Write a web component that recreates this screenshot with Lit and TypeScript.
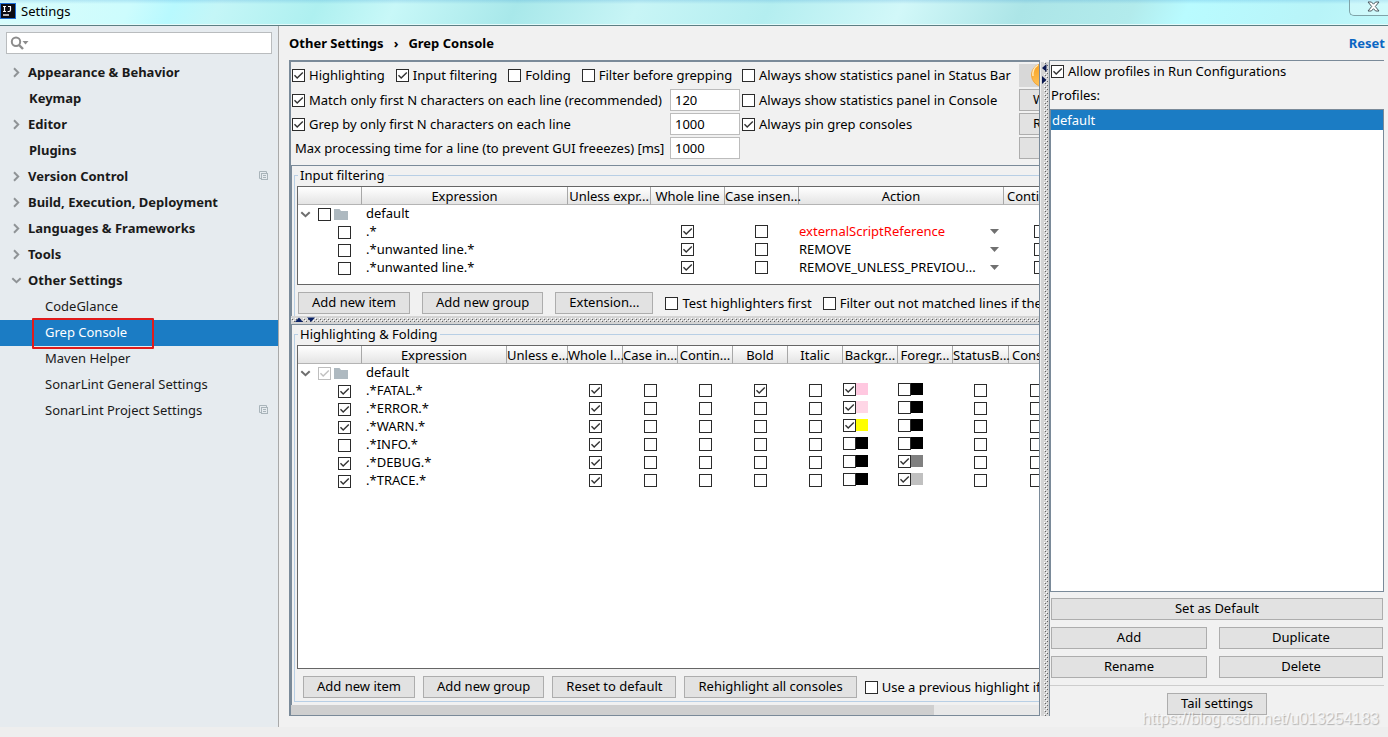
import { LitElement, html, css, svg, nothing } from "lit";
import { customElement } from "lit/decorators.js";
import { classMap } from "lit/directives/class-map.js";
import { styleMap } from "lit/directives/style-map.js";

interface NavItem {
  label: string;
  kind: "closed" | "open" | "top" | "child";
  selected?: boolean;
  project?: boolean;
}

const NAV: NavItem[] = [
  { label: "Appearance & Behavior", kind: "closed" },
  { label: "Keymap", kind: "top" },
  { label: "Editor", kind: "closed" },
  { label: "Plugins", kind: "top" },
  { label: "Version Control", kind: "closed", project: true },
  { label: "Build, Execution, Deployment", kind: "closed" },
  { label: "Languages & Frameworks", kind: "closed" },
  { label: "Tools", kind: "closed" },
  { label: "Other Settings", kind: "open" },
  { label: "CodeGlance", kind: "child" },
  { label: "Grep Console", kind: "child", selected: true },
  { label: "Maven Helper", kind: "child" },
  { label: "SonarLint General Settings", kind: "child" },
  { label: "SonarLint Project Settings", kind: "child", project: true },
];

const FILTER_ROWS = [
  { expr: ".*", action: "externalScriptReference", script: true },
  { expr: ".*unwanted line.*", action: "REMOVE", script: false },
  { expr: ".*unwanted line.*", action: "REMOVE_UNLESS_PREVIOU...", script: false },
];

const HIGHLIGHT_ROWS = [
  { expr: ".*FATAL.*", on: true, bold: true, bg: "#ffc8e0", fg: "#000000", bgOn: true, fgOn: false },
  { expr: ".*ERROR.*", on: true, bold: false, bg: "#ffd6e6", fg: "#000000", bgOn: true, fgOn: false },
  { expr: ".*WARN.*", on: true, bold: false, bg: "#ffff00", fg: "#000000", bgOn: true, fgOn: false },
  { expr: ".*INFO.*", on: false, bold: false, bg: "#000000", fg: "#000000", bgOn: false, fgOn: false },
  { expr: ".*DEBUG.*", on: true, bold: false, bg: "#000000", fg: "#808080", bgOn: false, fgOn: true },
  { expr: ".*TRACE.*", on: true, bold: false, bg: "#000000", fg: "#c0c0c0", bgOn: false, fgOn: true },
];

const chevron = (open: boolean) => html`<svg class="chev" width="11" height="11" viewBox="0 0 11 11">
  ${open
    ? svg`<path d="M1.3 3.2 L5.5 7.2 L9.7 3.2" fill="none" stroke="currentColor" stroke-width="2"/>`
    : svg`<path d="M3 1.3 L7.2 5.5 L3 9.7" fill="none" stroke="currentColor" stroke-width="2"/>`}
</svg>`;

const projectIcon = html`<svg class="proj" width="10" height="10" viewBox="0 0 10 10">
  <path d="M7.5 2V.5H.5v7H2" fill="none" stroke="#a9b4ba"/>
  <rect x="2.5" y="2.5" width="6" height="6" fill="none" stroke="#a9b4ba"/>
  <path d="M4 4.5h3M4 6.5h3" stroke="#a9b4ba"/>
</svg>`;

const folder = html`<svg class="folder" width="14" height="11" viewBox="0 0 14 11">
  <path d="M0 0h5.5l1.5 2h7v9H0z" fill="#aeb9c0"/>
</svg>`;

const check = (name: string, on = false, disabled = false) =>
  html`<input type="checkbox" aria-label=${name} .checked=${on} ?disabled=${disabled} />`;

const labelled = (text: string, on = false) =>
  html`<label class="check"><input type="checkbox" .checked=${on} /><span>${text}</span></label>`;

@customElement("app-root")
export class AppRoot extends LitElement {
  static styles = css`
    :host {
      display: flex;
      flex-direction: column;
      position: relative;
      height: 100vh;
      overflow: hidden;
      background: #f1f1f1;
      color: #000;
      font: 13px/18px "Noto Sans", "Open Sans", sans-serif;
    }
    *, *::before, *::after { box-sizing: border-box; }
    svg { display: block; flex: none; }
    button, input, select { font: inherit; color: inherit; margin: 0; border-radius: 0; }

    .titlebar {
      flex: none;
      display: flex;
      align-items: center;
      justify-content: space-between;
      height: 26px;
      padding-bottom: 4px;
      border-bottom: 1px solid #5c7f84;
      box-shadow: inset 0 -1px #e4fbfb;
      background:
        linear-gradient(rgba(0, 110, 200, 0.16), rgba(255, 255, 255, 0) 4px),
        linear-gradient(115deg, #d9fdfc 0, #cdfcfd 120px, #b8f9fe 160px, #c4f6f7 200px, #aef0f0 290px,
          #c8f8f8 360px, #a8e8ea 470px, #c8f5f6 580px, #b4eef0 700px, #d2f8f9 820px, #ace5e7 930px,
          #b2ebec 1030px, #b9fbff 1080px, #b8f4f8 1200px, #c6fbfc 1300px, #d8fefe 100%);
    }
    .title { display: flex; align-items: center; gap: 5px; }
    .close {
      width: 39px;
      height: 16px;
      margin-top: -6px;
      padding: 0 0 2px 17px;
      border: 1px solid #7fa3a8;
      border-width: 0 0 1px 1px;
      border-bottom-left-radius: 5px;
      background: rgba(255, 255, 255, 0.25);
    }

    .body { flex: 1; display: flex; min-height: 0; }
    .sidebar {
      flex: none;
      width: 279px;
      padding-top: 6px;
      border-right: 1px solid #a9a9a9;
      background: #e6ebef;
    }
    .search { position: relative; margin: 0 6px 6px; color: #8c8c8c; }
    .search input {
      display: block;
      width: 100%;
      height: 22px;
      padding: 0 4px 0 26px;
      border: 1px solid #b9bcbe;
      background: #fff;
      outline: none;
    }
    .search svg { position: absolute; left: 4px; top: 4px; }
    .nav { margin: 0; padding: 0; list-style: none; }
    .item {
      position: relative;
      display: flex;
      align-items: center;
      height: 26px;
      padding: 0 9px 2px 11px;
      color: #1a1a1a;
      text-decoration: none;
    }
    .item .chev { color: #8f9396; margin-right: 6px; }
    .item .name { flex: 1; }
    .parent { font-weight: 700; }
    .leaf { padding-left: 29px; }
    .child { padding-left: 45px; }
    .selected { background: #1b7cc4; color: #fff; }
    .mark {
      position: absolute;
      left: 32px;
      top: -2px;
      width: 122px;
      height: 31px;
      border: 2px solid #e01b1b;
      border-radius: 1px;
    }

    .main { flex: 1; min-width: 0; display: flex; flex-direction: column; padding: 0 0 11px 10px; }
    .crumbs {
      flex: none;
      display: flex;
      align-items: center;
      gap: 10px;
      height: 34px;
      padding-right: 3px;
      font-weight: 700;
    }
    .reset { margin-left: auto; color: #0b66c3; text-decoration: none; }
    .panes { flex: 1; min-height: 0; display: flex; padding-right: 4px; }

    .console {
      flex: 1;
      min-width: 0;
      display: flex;
      flex-direction: column;
      overflow: hidden;
      border: 1px solid #7a8a99;
      border-width: 2px 1px 1px 2px;
    }
    .options {
      flex: none;
      display: grid;
      grid-template-columns: 378px 70px 277px 80px;
      grid-template-rows: 26px repeat(3, 24px);
      column-gap: 1px;
      align-items: center;
      height: 104px;
      border-bottom: 1px solid #7a8a99;
    }
    .wide { grid-column: span 2; display: flex; gap: 11px; padding-left: 1px; }
    .options > .check { padding-left: 1px; }
    .hint { padding-left: 4px; white-space: nowrap; }
    .num {
      width: 70px;
      height: 22px;
      padding: 0 4px;
      border: 1px solid #bcbcbc;
      background: #fff;
      outline: none;
    }
    .check { display: flex; align-items: center; gap: 4px; white-space: nowrap; }
    input[type="checkbox"] {
      appearance: none;
      flex: none;
      display: block;
      width: 13px;
      height: 13px;
      border: 1px solid #2b2b2b;
      background: #fff;
    }
    input[type="checkbox"]:checked {
      background: #fff url("data:image/svg+xml,%3Csvg xmlns='http://www.w3.org/2000/svg' width='11' height='11'%3E%3Cpath d='M1.5 5.2 L4.2 8 L9.8 2.4' fill='none' stroke='%23333' stroke-width='1.4'/%3E%3C/svg%3E") center no-repeat;
    }
    input[type="checkbox"]:disabled { opacity: 0.3; }

    button {
      flex: none;
      height: 22px;
      padding: 0 13px 2px;
      border: 1px solid #adadad;
      background: #e2e2e2;
      line-height: 18px;
      white-space: nowrap;
    }
    .options button { text-align: left; }
    .options .donate { height: 23px; padding: 0 0 0 12px; border: 0; background: #d8d8d8; overflow: hidden; }

    .group { min-width: 0; display: flex; flex-direction: column; border-left: 1px solid #7a8a99; padding-left: 2px; }
    .group.filter { flex: none; height: 150px; }
    .group.highlight { flex: 1; min-height: 0; padding-bottom: 3px; }
    fieldset {
      flex: 1;
      display: flex;
      flex-direction: column;
      min-width: 0;
      min-height: 0;
      margin: 0;
      padding: 2px 0 3px 2px;
      border: 1px solid #b8cfe5;
      border-right: 0;
    }
    .filter fieldset { border-bottom: 0; }
    legend { height: 18px; margin-left: 1px; padding: 0 3px 0 2px; }
    .grid {
      flex: 1;
      min-height: 0;
      overflow: hidden;
      border: 1px solid #666;
      border-right: 0;
      background: #fff;
    }
    .filter .grid { flex: none; height: 99px; }
    table { table-layout: fixed; border-collapse: separate; border-spacing: 0; }
    th, td { height: 18px; padding: 0; white-space: nowrap; text-align: left; }
    th {
      padding-top: 2px;
      border-right: 1px solid #a8a8a8;
      border-bottom: 1px solid #b4b4b4;
      background: linear-gradient(#fff, #e4e4e4);
      font-weight: 400;
      line-height: 15px;
      text-align: center;
    }
    th.start { text-align: left; padding-left: 3px; }
    td.expr { padding-left: 4px; line-height: 16px; vertical-align: top; }
    td.box { padding-right: 1px; vertical-align: top; }
    td.box input { margin: 2px auto 0; }
    .tree { display: flex; align-items: center; height: 18px; padding: 1px 0 0 2px; color: #6e6e6e; }
    .tree input { margin: 0 3px 0 7px; }
    .tree.leafrow input { margin: 0 0 0 38px; }
    .swatch { display: flex; align-items: flex-start; height: 16px; }
    .swatch i { width: 12px; height: 12px; }
    select {
      appearance: none;
      display: block;
      width: 204px;
      height: 18px;
      padding: 0 20px 2px 0;
      border: 0;
      background: url("data:image/svg+xml,%3Csvg xmlns='http://www.w3.org/2000/svg' width='9' height='5'%3E%3Cpath d='M0 0h9L4.5 5z' fill='%23707070'/%3E%3C/svg%3E") 191px 6px no-repeat;
      line-height: 16px;
    }
    .script { color: #f00; }

    .actions { flex: none; display: flex; align-items: center; overflow: hidden; }
    .filter .actions { padding: 7px 0 0 1px; gap: 12px; }
    .highlight .actions { padding: 7px 0 0 6px; gap: 8px; }
    .actions .check + .check { margin-left: -1px; }

    .hsplit {
      flex: none;
      height: 9px;
      padding: 1px 0 0 4px;
      border-bottom: 1px solid #7a8a99;
      background: #d4d4d4 url("data:image/svg+xml,%3Csvg xmlns='http://www.w3.org/2000/svg' width='4' height='4'%3E%3Cpath d='M0 0h1v1h-1zM2 2h1v1h-1z' fill='%23fff'/%3E%3Cpath d='M1 1h1v1h-1zM3 3h1v1h-1z' fill='%23606060'/%3E%3C/svg%3E") 0 2px repeat-x;
    }
    .vsplit {
      flex: none;
      width: 8px;
      margin: 2px 0 0 1px;
      padding: 2px 0 0 1px;
      background: #d4d4d4 url("data:image/svg+xml,%3Csvg xmlns='http://www.w3.org/2000/svg' width='4' height='4'%3E%3Cpath d='M0 0h1v1h-1zM2 2h1v1h-1z' fill='%23fff'/%3E%3Cpath d='M1 1h1v1h-1zM3 3h1v1h-1z' fill='%23606060'/%3E%3C/svg%3E") 3px 0 repeat-y;
    }

    .scroll { flex: none; height: 10px; background: #e8e8e8; }
    .thumb { width: 86%; height: 10px; background: #cfcfcf; }

    .profiles {
      flex: none;
      width: 335px;
      display: flex;
      flex-direction: column;
      padding-left: 1px;
      border: 1px solid #7a8a99;
      border-width: 1px 0 0 1px;
    }
    .profiles > .check { height: 20px; }
    .caption { height: 28px; padding-top: 5px; }
    .list {
      flex: 1;
      min-height: 0;
      margin: 0 0 6px -1px;
      padding: 0;
      border: 1px solid #7a8a99;
      background: #fff;
      list-style: none;
    }
    .list li { height: 20px; padding: 1px 0 0 1px; background: #1b7cc4; color: #fff; }
    .buttons { display: grid; grid-template-columns: 156fr 164fr; gap: 7px 12px; padding-right: 1px; }
    .buttons .full { grid-column: span 2; }
    .tail {
      display: flex;
      justify-content: center;
      margin: 7px 0 0 -1px;
      padding: 7px 0 1px;
      border-top: 1px solid #cdcdcd;
    }
    .footer { flex: none; height: 10px; background: #eee; }
    .watermark {
      position: absolute;
      right: 9px;
      bottom: 8px;
      color: rgba(255, 255, 255, 0.7);
      font: 16px/20px "Liberation Sans", Arial, sans-serif;
      text-shadow: 1px 1px 1px rgba(150, 150, 150, 0.7);
    }
  `;

  private navItem(n: NavItem) {
    const cls = classMap({
      item: true,
      parent: n.kind !== "child",
      leaf: n.kind === "top",
      child: n.kind === "child",
      selected: !!n.selected,
    });
    return html`<li>
      <a class=${cls} href="#">
        ${n.kind === "open" || n.kind === "closed" ? chevron(n.kind === "open") : nothing}
        <span class="name">${n.label}</span>
        ${n.project ? projectIcon : nothing}
        ${n.selected ? html`<span class="mark"></span>` : nothing}
      </a>
    </li>`;
  }

  private columns(widths: number[]) {
    const total = widths.reduce((a, b) => a + b, 0);
    return {
      width: styleMap({ width: `${total}px` }),
      cols: html`<colgroup>${widths.map((w) => html`<col style=${styleMap({ width: `${w}px` })} />`)}</colgroup>`,
    };
  }

  private filterTable() {
    const { width, cols } = this.columns([64, 206, 83, 74, 74, 205, 74]);
    return html`<table style=${width}>
      ${cols}
      <thead>
        <tr>
          <th></th><th>Expression</th><th>Unless expr...</th><th>Whole line</th>
          <th>Case insen...</th><th>Action</th><th class="start">Continu...</th>
        </tr>
      </thead>
      <tbody>
        <tr>
          <td><div class="tree">${chevron(true)}${check("default")}${folder}</div></td>
          <td class="expr">default</td><td colspan="5"></td>
        </tr>
        ${FILTER_ROWS.map((r) => html`<tr>
          <td><div class="tree leafrow">${check("Enabled")}</div></td>
          <td class="expr">${r.expr}</td>
          <td></td>
          <td class="box">${check("Whole line", true)}</td>
          <td class="box">${check("Case insensitive")}</td>
          <td><select class=${r.script ? "script" : ""} aria-label="Action"><option>${r.action}</option></select></td>
          <td class="box">${check("Continue")}</td>
        </tr>`)}
      </tbody>
    </table>`;
  }

  private highlightTable() {
    const { width, cols } = this.columns([64, 145, 61, 55, 55, 55, 55, 55, 55, 55, 56, 55]);
    return html`<table style=${width}>
      ${cols}
      <thead>
        <tr>
          <th></th><th>Expression</th><th>Unless e...</th><th>Whole l...</th><th>Case in...</th>
          <th>Contin...</th><th>Bold</th><th>Italic</th><th>Backgr...</th><th>Foregr...</th>
          <th>StatusB...</th><th class="start">Conso...</th>
        </tr>
      </thead>
      <tbody>
        <tr>
          <td><div class="tree">${chevron(true)}${check("default", true, true)}${folder}</div></td>
          <td class="expr">default</td><td colspan="10"></td>
        </tr>
        ${HIGHLIGHT_ROWS.map((r) => html`<tr>
          <td><div class="tree leafrow">${check("Enabled", r.on)}</div></td>
          <td class="expr">${r.expr}</td>
          <td></td>
          <td class="box">${check("Whole line", true)}</td>
          <td class="box">${check("Case insensitive")}</td>
          <td class="box">${check("Continue matching")}</td>
          <td class="box">${check("Bold", r.bold)}</td>
          <td class="box">${check("Italic")}</td>
          <td><div class="swatch">${check("Background", r.bgOn)}<i style=${styleMap({ background: r.bg })}></i></div></td>
          <td><div class="swatch">${check("Foreground", r.fgOn)}<i style=${styleMap({ background: r.fg })}></i></div></td>
          <td class="box">${check("Status bar")}</td>
          <td class="box">${check("Console")}</td>
        </tr>`)}
      </tbody>
    </table>`;
  }

  render() {
    return html`
      <header class="titlebar">
        <div class="title">
          <svg width="16" height="16" viewBox="0 0 16 16">
            <rect width="16" height="16" fill="#1d6fd8"/>
            <rect x="1" y="1" width="14" height="14" fill="#0c0c14"/>
            <path d="M3 3.5h3M4.5 3.5v5M3 8.5h3M8 3.5h3M10.5 3.5v3.6q0 1.4-1.4 1.4H7.6" fill="none" stroke="#fff" stroke-width="1.2"/>
            <path d="M3 12h6" stroke="#fff" stroke-width="1.4"/>
          </svg>
          <span>Settings</span>
        </div>
        <button class="close" aria-label="Close">
          <svg width="13" height="11" viewBox="0 0 13 11">
            <path d="M1 1h3.4l2.1 2.2L8.600 1H12L8.300 5.500 12 10H8.600L6.500 7.700 4.400 10H1l3.700-4.500z" fill="#fff" stroke="#4b5960"/>
          </svg>
        </button>
      </header>

      <div class="body">
        <aside class="sidebar">
          <div class="search">
            <input type="text" aria-label="Search settings" />
            <svg width="20" height="14" viewBox="0 0 20 14">
              <circle cx="6" cy="5.800" r="4.200" fill="none" stroke="#8c8c8c" stroke-width="2"/>
              <path d="M9 9l4 4" stroke="#8c8c8c" stroke-width="2.400"/>
              <path d="M12.500 5h6l-3 3.600z" fill="#8c8c8c"/>
            </svg>
          </div>
          <ul class="nav">${NAV.map((n) => this.navItem(n))}</ul>
        </aside>

        <main class="main">
          <div class="crumbs">
            <span>Other Settings</span><span>›</span><span>Grep Console</span>
            <a class="reset" href="#">Reset</a>
          </div>
          <div class="panes">
            <section class="console">
              <div class="options">
                <div class="wide">
                  ${labelled("Highlighting", true)}${labelled("Input filtering", true)}
                  ${labelled("Folding")}${labelled("Filter before grepping")}
                </div>
                ${labelled("Always show statistics panel in Status Bar")}
                <button class="donate" aria-label="Donate">
                  <svg width="24" height="24" viewBox="0 0 24 24">
                    <defs><linearGradient id="sun" x1="0" y1="0" x2="0" y2="1">
                      <stop offset="0" stop-color="#f7a01e"/><stop offset="1" stop-color="#ffc35a"/>
                    </linearGradient></defs>
                    <circle cx="12" cy="11" r="11.500" fill="url(#sun)" stroke="#f3a63c"/>
                    <path d="M7 1q-6 4-5 11" fill="none" stroke="#ffe9b8" stroke-width="1.500"/>
                  </svg>
                </button>

                ${labelled("Match only first N characters on each line (recommended)", true)}
                <input class="num" type="text" aria-label="Maximum characters to match" value="120" />
                ${labelled("Always show statistics panel in Console")}
                <button>W</button>

                ${labelled("Grep by only first N characters on each line", true)}
                <input class="num" type="text" aria-label="Maximum characters to grep" value="1000" />
                ${labelled("Always pin grep consoles", true)}
                <button>R</button>

                <label class="hint" for="maxtime">Max processing time for a line (to prevent GUI freeezes) [ms]</label>
                <input class="num" id="maxtime" type="text" value="1000" />
                <span></span>
                <button aria-label="More"></button>
              </div>

              <div class="group filter">
                <fieldset>
                  <legend>Input filtering</legend>
                  <div class="grid">${this.filterTable()}</div>
                  <div class="actions">
                    <button>Add new item</button>
                    <button>Add new group</button>
                    <button>Extension...</button>
                    ${labelled("Test highlighters first")}
                    ${labelled("Filter out not matched lines if they")}
                  </div>
                </fieldset>
              </div>

              <div class="hsplit">
                <svg width="22" height="6" viewBox="0 0 22 6">
                  <path d="M0 5l4-4.500L8 5zM12 .500h8l-4 4.500z" fill="#0a2266"/>
                </svg>
              </div>

              <div class="group highlight">
                <fieldset>
                  <legend>Highlighting &amp; Folding</legend>
                  <div class="grid">${this.highlightTable()}</div>
                  <div class="actions">
                    <button>Add new item</button>
                    <button>Add new group</button>
                    <button>Reset to default</button>
                    <button>Rehighlight all consoles</button>
                    ${labelled("Use a previous highlight if")}
                  </div>
                </fieldset>
              </div>
              <div class="scroll"><div class="thumb"></div></div>
            </section>

            <div class="vsplit">
              <svg width="5" height="20" viewBox="0 0 5 20">
                <path d="M4.500 0v8L0 4zM0 12v8l4.500-4z" fill="#0a1850"/>
              </svg>
            </div>

            <section class="profiles">
              ${labelled("Allow profiles in Run Configurations", true)}
              <div class="caption">Profiles:</div>
              <ul class="list"><li>default</li></ul>
              <div class="buttons">
                <button class="full">Set as Default</button>
                <button>Add</button><button>Duplicate</button>
                <button>Rename</button><button>Delete</button>
              </div>
              <div class="tail"><button>Tail settings</button></div>
            </section>
          </div>
        </main>
      </div>
      <footer class="footer"></footer>
      <div class="watermark">https://blog.csdn.net/u013254183</div>
    `;
  }
}
